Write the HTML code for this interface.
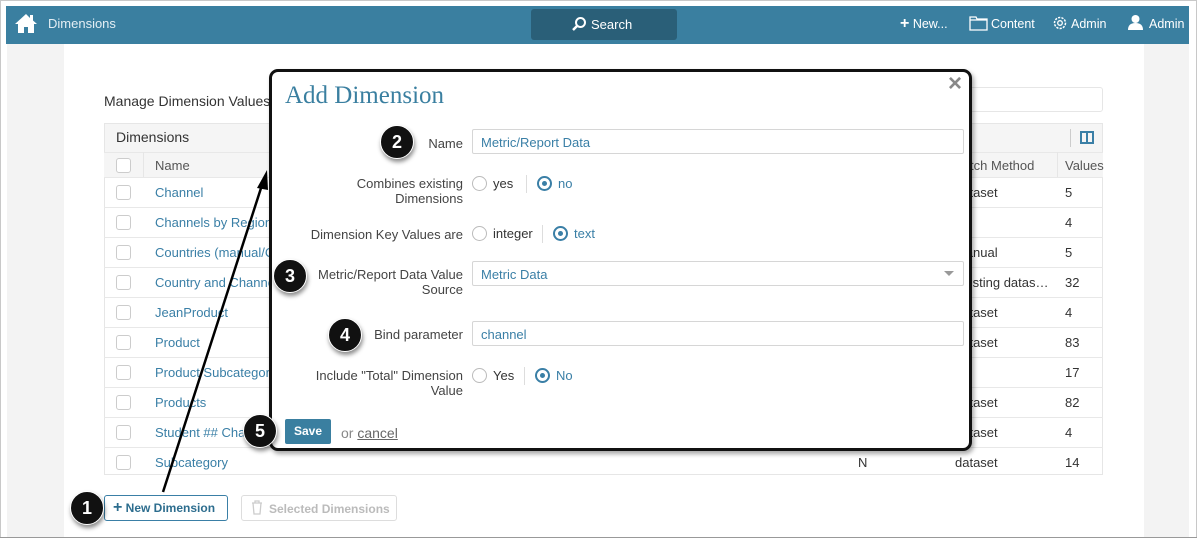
<!DOCTYPE html>
<html><head><style>
*{box-sizing:border-box;margin:0;padding:0}
body{width:1197px;height:541px;position:relative;background:#fff;font-family:"Liberation Sans",sans-serif;font-size:13px;color:#333;overflow:hidden}
.a{position:absolute}
.lnk{color:#3a7fa6}
.row{position:absolute;left:104px;width:999px;height:30px;border-top:1px solid #e8e8e8}
.cb{position:absolute;left:12px;top:7px;width:15px;height:15px;border:1px solid #ccc;border-radius:3px;background:#fff}
.row span{position:absolute;top:7px}
.num{position:absolute;width:34px;height:34px;border-radius:50%;background:#111;color:#fff;font-weight:bold;font-size:18px;text-align:center;line-height:32px;box-shadow:1px 3px 4px rgba(0,0,0,.45);border:1px solid #fff}
.lbl{position:absolute;text-align:right;color:#444;line-height:15px}
.inp{position:absolute;left:200px;width:492px;height:25px;border:1px solid #d6d6d6;color:#3a7fa6;padding:5px 8px;border-radius:2px}
.rad{position:absolute;width:15px;height:15px;border:1px solid #bbb;border-radius:50%}
.rad.on{border:2px solid #3a7fa6}
.rad.on:after{content:"";position:absolute;left:3px;top:3px;width:5px;height:5px;border-radius:50%;background:#3a7fa6}
.sep{position:absolute;width:1px;height:18px;background:#ddd}
</style></head><body>
<div class="a" style="left:0;top:0;width:1197px;height:541px;border:1px solid #c8c8c8"></div>
<div class="a" style="left:7px;top:44px;width:1182px;height:493px;background:#f3f3f3"></div>
<div class="a" style="left:64px;top:44px;width:1080px;height:493px;background:#fff"></div>
<div class="a" style="left:0;top:537px;width:1197px;height:4px;border-top:1px solid #999;background:#fff"></div>
<!-- header -->
<div class="a" style="left:6px;top:6px;width:1183px;height:38px;background:#3a7fa0"></div>
<svg class="a" style="left:14px;top:12px" width="24" height="22" viewBox="0 0 24 22"><path d="M12 2 L1 12 L4 12 L4 21 L10 21 L10 15 L14 15 L14 21 L20 21 L20 12 L23 12 L19 8.5 L19 3 L16 3 L16 6 Z" fill="#fff"/></svg>
<div class="a" style="left:48px;top:16px;color:#e3eef4;font-size:13px">Dimensions</div>
<div class="a" style="left:531px;top:9px;width:146px;height:31px;background:#2a5f78;border-radius:3px"></div>
<svg class="a" style="left:571px;top:16px" width="16" height="16"><circle cx="9.5" cy="6.5" r="4.5" stroke="#fff" stroke-width="2" fill="none"/><path d="M6 10 L2 14" stroke="#fff" stroke-width="2.5"/></svg>
<div class="a" style="left:591px;top:17px;color:#fff;font-size:13px">Search</div>
<div class="a" style="left:900px;top:15px;color:#fff;font-size:12.5px"><b style="font-size:16px">+</b> New...</div>
<svg class="a" style="left:969px;top:15px" width="19" height="16"><path d="M1 2 H7 L8 4 H18 V15 H1 Z M1 5 H18" stroke="#fff" fill="none" stroke-width="1.3"/></svg>
<div class="a" style="left:991px;top:17px;color:#fff;font-size:12.5px">Content</div>
<svg class="a" style="left:1052px;top:15px" width="16" height="16"><circle cx="8" cy="8" r="5.5" stroke="#fff" stroke-width="1.5" fill="none" stroke-dasharray="2.2 1.2"/><circle cx="8" cy="8" r="2.3" stroke="#fff" fill="none" stroke-width="1.3"/></svg>
<div class="a" style="left:1071px;top:17px;color:#fff;font-size:12.5px">Admin</div>
<svg class="a" style="left:1128px;top:14px" width="15" height="16"><circle cx="7.5" cy="5" r="4" fill="#fff"/><path d="M0 16 Q0 9 7.5 9 Q15 9 15 16Z" fill="#fff"/></svg>
<div class="a" style="left:1149px;top:17px;color:#fff;font-size:12.5px">Admin</div>
<!-- page -->
<div class="a" style="left:104px;top:93px;font-size:14px;color:#333">Manage Dimension Values</div>
<div class="a" style="left:960px;top:87px;width:143px;height:25px;border:1px solid #e6e6e6;border-radius:3px"></div>
<div class="a" style="left:104px;top:123px;width:999px;height:352px;border:1px solid #e6e6e6"></div>
<div class="a" style="left:105px;top:124px;width:997px;height:29px;background:#f5f5f5"></div>
<div class="a" style="left:116px;top:129px;font-size:14px">Dimensions</div>
<div class="a" style="left:1070px;top:129px;width:1px;height:18px;background:#ccc"></div>
<div class="a" style="left:1080px;top:131px;width:14px;height:13px;border:2px solid #3a7fa6"></div><div class="a" style="left:1086px;top:131px;width:2px;height:13px;background:#3a7fa6"></div>
<div class="row" style="top:152px;height:25px;background:#f5f5f5"><div class="cb" style="top:5px"></div><span style="left:51px;top:5px;color:#555">Name</span><span style="left:848px;top:5px;color:#555">Match Method</span><span style="left:961px;top:5px;color:#555">Values</span></div>
<div class="a" style="left:143px;top:152px;width:1px;height:25px;background:#e6e6e6"></div>
<div class="a" style="left:1057px;top:152px;width:1px;height:25px;background:#e6e6e6"></div>
<div class="row" style="top:177px"><div class="cb"></div><span class="lnk" style="left:51px">Channel</span><span style="left:851px">dataset</span><span style="left:961px">5</span></div>
<div class="row" style="top:207px"><div class="cb"></div><span class="lnk" style="left:51px">Channels by Region</span><span style="left:961px">4</span></div>
<div class="row" style="top:237px"><div class="cb"></div><span class="lnk" style="left:51px">Countries (manual/CSV)</span><span style="left:851px">manual</span><span style="left:961px">5</span></div>
<div class="row" style="top:267px"><div class="cb"></div><span class="lnk" style="left:51px">Country and Channel</span><span style="left:852px">existing datas…</span><span style="left:961px">32</span></div>
<div class="row" style="top:297px"><div class="cb"></div><span class="lnk" style="left:51px">JeanProduct</span><span style="left:851px">dataset</span><span style="left:961px">4</span></div>
<div class="row" style="top:327px"><div class="cb"></div><span class="lnk" style="left:51px">Product</span><span style="left:851px">dataset</span><span style="left:961px">83</span></div>
<div class="row" style="top:357px"><div class="cb"></div><span class="lnk" style="left:51px">Product Subcategory</span><span style="left:961px">17</span></div>
<div class="row" style="top:387px"><div class="cb"></div><span class="lnk" style="left:51px">Products</span><span style="left:851px">dataset</span><span style="left:961px">82</span></div>
<div class="row" style="top:417px"><div class="cb"></div><span class="lnk" style="left:51px">Student ## Channel</span><span style="left:851px">dataset</span><span style="left:961px">4</span></div>
<div class="row" style="top:447px;height:28px"><div class="cb"></div><span class="lnk" style="left:51px">Subcategory</span><span style="left:754px">N</span><span style="left:851px">dataset</span><span style="left:961px">14</span></div>
<div class="a" style="left:104px;top:495px;width:124px;height:26px;border:1px solid #3a7fa6;border-radius:3px;color:#2d6d8e;font-weight:bold;font-size:12px;padding:5px 0 0 8px"><span style="font-size:16px;line-height:10px">+</span> New Dimension</div>
<div class="a" style="left:241px;top:495px;width:156px;height:26px;border:1px solid #ddd;border-radius:3px;color:#bbb;font-weight:bold;font-size:12px;padding:6px 0 0 27px">Selected Dimensions</div>
<svg class="a" style="left:251px;top:500px" width="12" height="15"><path d="M1 3 H11 M4 3 V1 H8 V3 M2 3 L3 14 H9 L10 3" stroke="#ccc" fill="none" stroke-width="1.3"/></svg>
<!-- arrow -->
<svg class="a" style="left:0;top:0" width="1197" height="541"><line x1="163" y1="492" x2="262" y2="185" stroke="#000" stroke-width="2.5"/><path d="M267 170 L257 188 L268 190Z" fill="#000"/></svg>
<!-- modal -->
<div class="a" style="left:269px;top:69px;width:703px;height:382px;border:3px solid #111;border-radius:9px;background:#fff;box-shadow:2px 3px 5px rgba(0,0,0,.35)">
<div class="a" style="left:13px;top:10px;font-family:'Liberation Serif',serif;font-size:25px;color:#3a7fa0">Add Dimension</div>
<div class="a" style="left:676px;top:-2px;font-size:24px;color:#888;font-weight:bold">×</div>
<div class="lbl" style="top:64px;right:506px">Name</div>
<div class="inp" style="top:57px">Metric/Report Data</div>
<div class="lbl" style="top:104px;right:506px">Combines existing<br>Dimensions</div>
<div class="rad" style="left:200px;top:104px"></div><div class="a" style="left:221px;top:104px">yes</div>
<div class="sep" style="left:254px;top:103px"></div>
<div class="rad on" style="left:265px;top:104px"></div><div class="a lnk" style="left:286px;top:104px">no</div>
<div class="lbl" style="top:155px;right:506px">Dimension Key Values are</div>
<div class="rad" style="left:200px;top:154px"></div><div class="a" style="left:221px;top:154px">integer</div>
<div class="sep" style="left:270px;top:153px"></div>
<div class="rad on" style="left:281px;top:154px"></div><div class="a lnk" style="left:302px;top:154px">text</div>
<div class="lbl" style="top:195px;right:506px">Metric/Report Data Value<br>Source</div>
<div class="inp" style="top:189px">Metric Data</div>
<div class="a" style="left:672px;top:199px;border:5px solid transparent;border-top:5px solid #999"></div>
<div class="lbl" style="top:255px;right:506px">Bind parameter</div>
<div class="inp" style="top:249px">channel</div>
<div class="lbl" style="top:296px;right:506px">Include "Total" Dimension<br>Value</div>
<div class="rad" style="left:200px;top:296px"></div><div class="a" style="left:221px;top:296px">Yes</div>
<div class="sep" style="left:252px;top:295px"></div>
<div class="rad on" style="left:263px;top:296px"></div><div class="a lnk" style="left:284px;top:296px">No</div>
<div class="a" style="left:13px;top:347px;width:46px;height:25px;background:#3a7fa0;color:#fff;font-weight:bold;font-size:12px;text-align:center;line-height:25px;border-radius:2px">Save</div>
<div class="a" style="left:69px;top:353px;color:#888;font-size:14px">or <span style="color:#666;text-decoration:underline">cancel</span></div>
</div>
<div class="num" style="left:380px;top:125px">2</div>
<div class="num" style="left:273px;top:259px">3</div>
<div class="num" style="left:328px;top:318px">4</div>
<div class="num" style="left:243px;top:414px">5</div>
<div class="num" style="left:70px;top:491px">1</div>
</body></html>
